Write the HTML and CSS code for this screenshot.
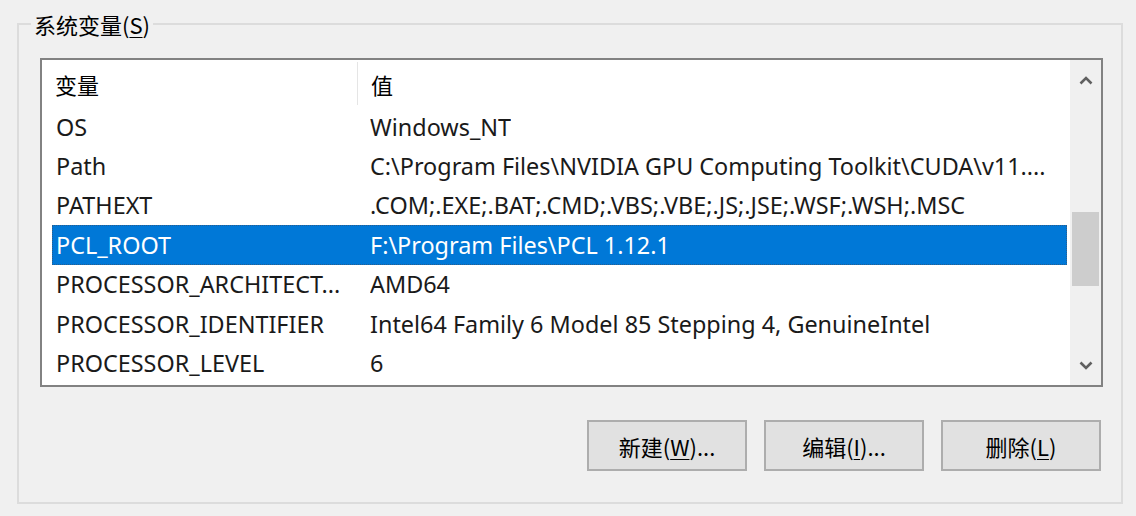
FILE: index.html
```html
<!DOCTYPE html>
<html lang="zh-CN">
<head>
<meta charset="utf-8">
<title>系统变量</title>
<link rel="stylesheet" href="styles.css">
</head>
<body>
<fieldset class="group">
  <legend class="group-title">系统变量(<u>S</u>)</legend>
  <div class="listview">
    <div class="lv-main">
      <div class="lv-header">
        <div class="lv-hcell lv-hcell-name">变量</div>
        <div class="lv-hcell lv-hcell-value">值</div>
      </div>
      <div class="lv-row"><span class="lv-name">OS</span><span class="lv-value">Windows_NT</span></div>
      <div class="lv-row"><span class="lv-name">Path</span><span class="lv-value">C:\Program Files\NVIDIA GPU Computing Toolkit\CUDA\v11....</span></div>
      <div class="lv-row"><span class="lv-name">PATHEXT</span><span class="lv-value">.COM;.EXE;.BAT;.CMD;.VBS;.VBE;.JS;.JSE;.WSF;.WSH;.MSC</span></div>
      <div class="lv-row lv-row-selected"><span class="lv-name">PCL_ROOT</span><span class="lv-value">F:\Program Files\PCL 1.12.1</span></div>
      <div class="lv-row"><span class="lv-name">PROCESSOR_ARCHITECT...</span><span class="lv-value">AMD64</span></div>
      <div class="lv-row"><span class="lv-name">PROCESSOR_IDENTIFIER</span><span class="lv-value">Intel64 Family 6 Model 85 Stepping 4, GenuineIntel</span></div>
      <div class="lv-row"><span class="lv-name">PROCESSOR_LEVEL</span><span class="lv-value">6</span></div>
    </div>
    <div class="scrollbar">
      <div class="sb-btn">
        <svg class="sb-arrow" width="14" height="9" viewBox="0 0 14 9"><path d="M1.5 7.5 L7 2 L12.5 7.5" fill="none" stroke="#606060" stroke-width="2.6"/></svg>
      </div>
      <div class="sb-track"><div class="sb-thumb"></div></div>
      <div class="sb-btn">
        <svg class="sb-arrow" width="14" height="9" viewBox="0 0 14 9"><path d="M1.5 1.5 L7 7 L12.5 1.5" fill="none" stroke="#606060" stroke-width="2.6"/></svg>
      </div>
    </div>
  </div>
  <div class="actions">
    <button class="btn">新建(<u>W</u>)...</button>
    <button class="btn">编辑(<u>I</u>)...</button>
    <button class="btn">删除(<u>L</u>)</button>
  </div>
</fieldset>
</body>
</html>
```

FILE: styles.css
```css
html, body {
  margin: 0;
  background: #f0f0f0;
}

body {
  font-family: "Noto Sans", "Noto Sans CJK SC", sans-serif;
  color: #000;
}

.group {
  margin: 11px 13px 0 17px;
  padding: 0 18px 31px 21px;
  border: 2px solid #dcdcdc;
  min-width: 0;
}

.group-title {
  margin-left: -9px;
  padding: 0 3px;
  font-family: "Noto Sans CJK SC", sans-serif;
  font-size: 22px;
  line-height: 26px;
  color: #000;
}

.group-title u,
.btn u {
  text-decoration-thickness: 1px;
  text-underline-offset: 3px;
}

.listview {
  margin-top: 21px;
  height: 329px;
  box-sizing: border-box;
  border: 2px solid #828282;
  background: #fff;
  display: flex;
}

.lv-main {
  flex: 1;
  min-width: 0;
  overflow: hidden;
}

.lv-header {
  display: flex;
  height: 47px;
  font-family: "Noto Sans CJK SC", sans-serif;
  font-size: 22px;
}

.lv-hcell {
  display: flex;
  align-items: center;
  padding-left: 13px;
}

.lv-hcell-name {
  width: 316px;
  box-sizing: border-box;
  margin: 2px 0;
  border-right: 1px solid #e5e5e5;
}

.lv-row {
  display: flex;
  align-items: center;
  height: 39.4px;
  box-sizing: border-box;
  margin: 0 3px 0 10px;
  border: 1px solid transparent;
  font-size: 23.4px;
  color: #1a1a1a;
  white-space: nowrap;
}

.lv-row-selected {
  background: #0078d7;
  color: #fff;
  border: 1px dotted #2c5e8c;
}

.lv-name {
  width: 317px;
  flex: none;
  box-sizing: border-box;
  padding-left: 3px;
  overflow: hidden;
}

.lv-value {
  overflow: hidden;
}

.scrollbar {
  width: 31px;
  flex: none;
  background: #f0f0f0;
  display: flex;
  flex-direction: column;
}

.sb-btn {
  height: 40px;
  display: flex;
  align-items: center;
  justify-content: center;
}

.sb-track {
  flex: 1;
}

.sb-thumb {
  margin: 112px 2px 0 2px;
  height: 74px;
  background: #cdcdcd;
}

.actions {
  display: flex;
  justify-content: flex-end;
  gap: 17px;
  margin-top: 33px;
  padding-right: 2px;
}

.btn {
  width: 160px;
  height: 51px;
  padding: 0;
  border: 2px solid #adadad;
  background: #e1e1e1;
  color: #000;
  font-family: "Noto Sans CJK SC", sans-serif;
  font-size: 22px;
}
```
